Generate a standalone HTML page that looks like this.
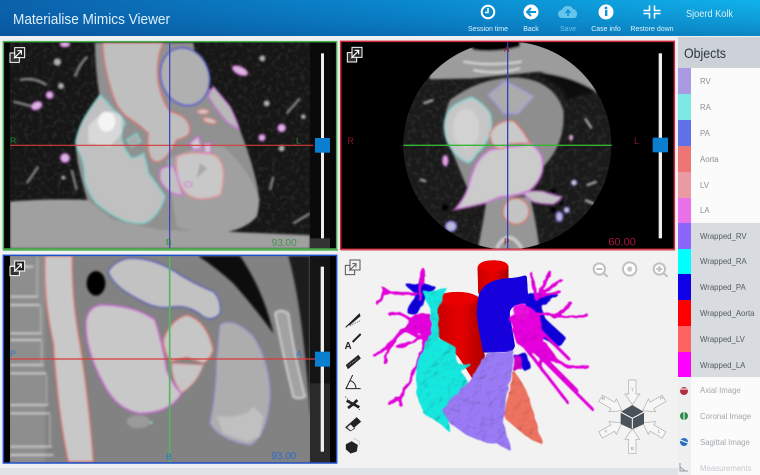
<!DOCTYPE html>
<html><head><meta charset="utf-8"><title>Materialise Mimics Viewer</title>
<style>
html,body{margin:0;padding:0;width:760px;height:475px;overflow:hidden;background:#eef0f2}
svg{display:block;font-family:"Liberation Sans",sans-serif}
</style></head><body>
<svg width="760" height="475" viewBox="0 0 760 475" xmlns="http://www.w3.org/2000/svg">
<defs>
<linearGradient id="hh" x1="0" x2="1" y1="0" y2="0"><stop offset="0" stop-color="#0b62ab"/><stop offset=".5" stop-color="#0a86cc"/><stop offset="1" stop-color="#10b2ea"/></linearGradient>
<linearGradient id="hv" x1="0" x2="0" y1="0" y2="1"><stop offset="0" stop-color="#0a5fa8" stop-opacity="0"/><stop offset="1" stop-color="#063f85" stop-opacity=".38"/></linearGradient>
<linearGradient id="redg" x1="0" x2="1" y1="0" y2="0"><stop offset="0" stop-color="#c80000"/><stop offset=".5" stop-color="#e60000"/><stop offset="1" stop-color="#a80000"/></linearGradient>
<filter id="b" x="-5%" y="-5%" width="110%" height="110%"><feGaussianBlur stdDeviation="3.2"/></filter>
<filter id="goo" x="-5%" y="-5%" width="110%" height="110%"><feGaussianBlur stdDeviation="4"/><feColorMatrix values="1 0 0 0 0 0 1 0 0 0 0 0 1 0 0 0 0 0 9 -3.6"/></filter>
<filter id="org" x="-5%" y="-5%" width="110%" height="110%">
<feGaussianBlur in="SourceGraphic" stdDeviation="3.5"/><feColorMatrix values="1 0 0 0 0 0 1 0 0 0 0 0 1 0 0 0 0 0 9 -3.6" result="g"/>
<feTurbulence type="fractalNoise" baseFrequency=".03" numOctaves="2" seed="4" result="t1"/><feDisplacementMap in="g" in2="t1" scale="16" result="s"/>
<feTurbulence type="fractalNoise" baseFrequency=".035" numOctaves="3" seed="11"/><feDiffuseLighting surfaceScale="5" diffuseConstant="1.22" lighting-color="#fff" result="l"><feDistantLight azimuth="230" elevation="58"/></feDiffuseLighting>
<feComposite in="l" in2="s" operator="arithmetic" k1="1.05"/><feGaussianBlur stdDeviation="1.6"/>
</filter>
<filter id="noise" x="0" y="0" width="100%" height="100%"><feTurbulence type="fractalNoise" baseFrequency=".07" numOctaves="3" seed="9"/><feColorMatrix values="0 0 0 0 1 0 0 0 0 1 0 0 0 0 1 1.6 0 0 0 -.72"/></filter>
<clipPath id="c1"><rect x="30" y="128" width="900" height="618"/></clipPath>
<clipPath id="c2"><circle cx="502" cy="436" r="312"/></clipPath>
<clipPath id="c2b"><rect x="5" y="127" width="995" height="619"/></clipPath>
<clipPath id="c3"><rect x="30" y="18" width="900" height="620"/></clipPath>
<g id="exp" fill="none" stroke="#fff" stroke-width="3"><rect x="14" y="0" width="30" height="30" fill="#222"/><path d="M0,16h14v14h14v14H0z" fill="#333"/><path d="M12,32L34,10M22,9h12v12" stroke-width="3.5"/></g>
<path id="ar" d="M-11,-110H11V-68H22L0,-36L-22,-68H-11Z" fill="#f6f6f6" stroke="#adadad" stroke-width="2"/>
</defs>

<rect width="760" height="475" fill="#eef0f2"/>

<!-- header -->
<rect width="760" height="36" fill="url(#hh)"/>
<rect width="760" height="36" fill="url(#hv)"/>
<text x="13" y="24" font-size="14.5" fill="#dff0fa" textLength="157" lengthAdjust="spacingAndGlyphs">Materialise  Mimics Viewer</text>
<g fill="#fff">
<circle cx="488" cy="12" r="6.3" fill="none" stroke="#fff" stroke-width="2"/><path d="M488,8v4.5h-3" fill="none" stroke="#fff" stroke-width="1.5"/>
<circle cx="531" cy="12" r="7.5"/><path d="M536,12h-8M531,8l-4,4 4,4" fill="none" stroke="#0c93d8" stroke-width="2"/>
<path d="M562,18a4,4 0 0 1 0-8a6,6 0 0 1 11-1a5,5 0 0 1 2,9z" fill="#66c3ea"/><path d="M568,16v-5M565.5,13l2.5-3 2.5,3" fill="none" stroke="#0c93d8" stroke-width="1.5"/>
<circle cx="606" cy="12" r="7.5"/><rect x="605" y="10" width="2.4" height="6" fill="#0c93d8"/><circle cx="606" cy="8" r="1.4" fill="#0c93d8"/>
<path d="M643.5,10.5h6v-5M660.5,10.5h-6v-5M643.5,13.5h6v5M660.5,13.5h-6v5" fill="none" stroke="#fff" stroke-width="1.6"/>
</g>
<g font-size="7" fill="#dcf1fb" text-anchor="middle">
<text x="488" y="31">Session time</text><text x="531" y="31">Back</text><text x="568" y="31" fill="#6cc5ea">Save</text><text x="606" y="31">Case info</text><text x="652" y="31">Restore down</text>
</g>
<text x="686" y="17" font-size="10" fill="#dcf1fb" textLength="47" lengthAdjust="spacingAndGlyphs">Sjoerd Kolk</text>

<!-- panel 1 -->
<g transform="scale(.33333)">
<rect x="10" y="125" width="1000" height="622" fill="#060606"/>
<g clip-path="url(#c1)">
<rect x="30" y="128" width="900" height="618" fill="#161616"/>
<rect x="30" y="128" width="900" height="618" filter="url(#noise)" opacity=".12"/>
<g filter="url(#b)">
<path d="M60,240Q100,230 140,255M40,305L100,320M225,230Q240,190 262,170M860,340L900,295M810,570L820,530M880,670L930,640M80,550L115,500M215,510L230,570" stroke="#8a8a8a" stroke-width="7" fill="none"/>
<g fill="#b0b0b0"><circle cx="172" cy="186" r="11"/><circle cx="183" cy="258" r="9"/><circle cx="787" cy="175" r="9"/><circle cx="800" cy="310" r="9"/><circle cx="910" cy="350" r="7"/><circle cx="845" cy="445" r="9"/><circle cx="190" cy="533" r="6"/></g>
<g fill="#d9b7df" stroke="#d070d8" stroke-width="4"><ellipse cx="720" cy="212" rx="24" ry="11" transform="rotate(25 720 212)"/><circle cx="149" cy="285" r="10"/><ellipse cx="110" cy="317" rx="16" ry="11" transform="rotate(-25 110 317)"/><circle cx="845" cy="384" r="11"/><circle cx="786" cy="413" r="9"/><circle cx="195" cy="474" r="13"/><ellipse cx="195" cy="133" rx="14" ry="7"/></g>
<path d="M285,128H580Q590,200 625,260Q680,330 720,390Q770,520 778,600Q775,635 770,650Q740,685 680,695L930,705V746H30V605Q150,595 262,600Q225,480 228,420Q250,340 298,285Q285,200 285,128Z" fill="#909090"/>
<path d="M30,605Q150,595 262,600L340,660L480,690L680,695L930,710V746H30Z" fill="#a0a0a0"/>
<path d="M500,480Q600,430 670,440Q750,510 778,600Q775,635 770,650Q730,690 680,695Q590,700 530,680Z" fill="#a0a0a0"/>
<path d="M308,128Q310,200 340,290Q355,330 380,350Q420,375 445,400Q440,440 450,470Q460,488 475,485Q500,480 530,420Q550,415 565,405Q575,385 565,370Q555,345 510,335Q485,300 475,250Q465,180 490,128Z" fill="#bfbfbf" stroke="#dd6a62" stroke-width="4"/>
<ellipse cx="555" cy="230" rx="72" ry="88" transform="rotate(-18 555 230)" fill="#b0b0b0" stroke="#4b55c8" stroke-width="5"/>
<path d="M625,290Q632,270 640,260Q670,295 690,320Q710,360 718,388Q695,378 680,365Q650,330 625,290Z" fill="#b8b8b8" stroke="#c868d8" stroke-width="4"/>
<ellipse cx="609" cy="335" rx="17" ry="7" fill="#ccc" stroke="#e08078" stroke-width="4"/><ellipse cx="629" cy="362" rx="20" ry="7" transform="rotate(15 629 362)" fill="#ccc" stroke="#e08078" stroke-width="4"/>
<path d="M300,285Q325,310 340,330Q365,345 375,370Q360,395 365,420Q375,455 395,475Q420,470 430,460Q440,490 445,520Q475,560 495,590Q485,620 470,640Q450,665 430,670Q395,670 370,660Q325,640 290,610Q265,580 255,540Q255,490 240,460Q225,440 228,420Q240,370 265,335Z" fill="#c0c0c0" stroke="#72d4d0" stroke-width="4"/>
<path d="M265,380Q320,310 365,350L365,400L330,440L265,430Z" fill="#d8d8d8"/><ellipse cx="320" cy="365" rx="26" ry="30" fill="#f4f4f4"/>
<path d="M380,420L410,400L422,425L395,440Z" fill="#aaa" stroke="#72d4d0" stroke-width="4"/>
<path d="M530,470Q565,455 600,460Q640,460 650,470Q670,490 670,520Q670,560 660,585Q620,600 590,595Q565,590 550,570Q530,540 530,510Z" fill="#c8c8c8" stroke="#e89098" stroke-width="4"/>
<path d="M600,490L622,505L590,535Z" fill="#a8a8a8"/>
<path d="M480,510Q500,495 520,500Q530,520 535,540Q540,565 550,585Q525,585 510,575Q490,560 480,540Z" fill="#c2c2c2" stroke="#d060d8" stroke-width="4"/>
<path d="M570,430L595,408L605,445L580,450Z" fill="#ccc" stroke="#d060d8" stroke-width="4"/><path d="M612,432L632,430L632,458L615,458Z" fill="#ccc" stroke="#d060d8" stroke-width="3"/>
<ellipse cx="565" cy="553" rx="12" ry="7" fill="#ccc" stroke="#d060d8" stroke-width="3"/>
</g>
</g>
<rect x="930" y="128" width="60" height="618" fill="#0a0a0a"/>
<rect x="930" y="715" width="60" height="30" fill="#333"/>
<path d="M30,436H940" stroke="#d83a3a" stroke-width="3.5"/>
<path d="M509,128V746" stroke="#4048c0" stroke-width="4"/>
<rect x="10" y="125" width="1000" height="622" fill="none" stroke="#48b04e" stroke-width="4.5"/>
<text x="30" y="430" font-size="26" fill="#2e8c3a">R</text><text x="888" y="430" font-size="26" fill="#2e8c3a">L</text>
<text x="498" y="735" font-size="26" fill="#2e8c3a">B</text><text x="815" y="738" font-size="30" fill="#2e8c3a" opacity=".8">93.00</text>
<rect x="963" y="160" width="9" height="555" fill="#eee"/><rect x="945" y="414" width="45" height="44" fill="#0a7fd0"/>
<use href="#exp" x="30" y="143"/>
</g>

<!-- panel 2 -->
<g transform="translate(340,0) scale(.33333)">
<rect x="2" y="124" width="1001" height="624" fill="#000"/>
<g clip-path="url(#c2b)">
<g clip-path="url(#c2)">
<rect x="180" y="120" width="650" height="640" fill="#1a1a1a"/>
<rect x="180" y="120" width="650" height="640" filter="url(#noise)" opacity=".12"/>
<g filter="url(#b)">
<path d="M240,125H770V280Q700,240 600,215Q500,225 400,235L270,238Z" fill="#9c9c9c"/>
<path d="M380,125H540V140Q470,160 400,150Z" fill="#050505"/>
<path d="M370,185Q450,200 545,185M400,210Q470,225 540,205" stroke="#d8d8d8" stroke-width="6" fill="none"/>
<path d="M595,218Q690,225 770,275Q720,285 680,300Q670,260 640,250Z" fill="#111"/>
<path d="M330,300Q420,232 530,232Q640,240 670,330Q678,430 610,500L560,585L460,600L380,560L330,440Q300,360 330,300Z" fill="#8e8e8e"/>
<path d="M440,595L570,590Q590,670 600,760H410Q430,670 440,595Z" fill="#969696"/>
<path d="M445,285Q470,265 495,245Q540,265 580,290Q555,315 535,340H490Q470,310 445,285Z" fill="#ababab" stroke="#a898e0" stroke-width="4"/>
<path d="M395,292Q430,310 450,340Q458,370 450,400Q435,440 410,460Q400,480 385,488Q340,470 320,420Q298,350 345,315Q370,300 395,292Z" fill="#c6c6c6" stroke="#74d8d4" stroke-width="4"/>
<ellipse cx="378" cy="385" rx="40" ry="60" fill="#d2d2d2"/>
<path d="M410,490Q425,465 450,450Q480,445 505,440Q540,440 570,430Q595,445 605,470Q612,500 605,520Q595,550 570,570Q525,590 480,590Q450,605 430,610Q390,620 345,628Q375,595 385,560Q395,520 410,490Z" fill="#cbcbcb" stroke="#cc70d8" stroke-width="5"/>
<path d="M548,580Q580,570 610,575Q640,588 665,590Q655,605 640,612Q605,612 580,605Z" fill="#c2c2c2" stroke="#cc70d8" stroke-width="4"/>
<path d="M450,400Q470,360 520,362Q550,390 570,430Q535,430 510,432Q495,445 480,447Q450,440 450,400Z" fill="#c9c9c9" stroke="#dc6a62" stroke-width="4"/>
<circle cx="528" cy="634" r="39" fill="#c4c4c4" stroke="#dc6a62" stroke-width="4"/>
<path d="M470,745Q505,680 545,745" fill="none" stroke="#d0d0d0" stroke-width="10"/>
<ellipse cx="333" cy="679" rx="16" ry="15" fill="#b8b8d8" stroke="#7a70e0" stroke-width="4"/>
<ellipse cx="658" cy="650" rx="10" ry="14" fill="#b8b8d8" stroke="#7a70e0" stroke-width="4"/>
<circle cx="680" cy="630" r="8" fill="#ccc" stroke="#7a70e0" stroke-width="4"/><circle cx="702" cy="548" r="8" fill="#ccc" stroke="#7a70e0" stroke-width="3"/>
<ellipse cx="316" cy="482" rx="8" ry="16" fill="#e0a8e0" stroke="#cc70d8" stroke-width="3"/><ellipse cx="693" cy="413" rx="6" ry="9" fill="#e0a8e0"/>
<g fill="#000"><circle cx="640" cy="575" r="9"/><circle cx="640" cy="630" r="9"/><circle cx="663" cy="610" r="7"/><circle cx="315" cy="622" r="10"/></g>
<path d="M250,310L280,300M735,355L755,385M735,600L770,615M770,545L740,556M240,538L258,544" stroke="#aaa" stroke-width="7"/>
</g>
</g>
<path d="M190,436H815" stroke="#35b535" stroke-width="4"/>
<path d="M503,127V746" stroke="#3840b8" stroke-width="4"/>
</g>
<rect x="2" y="124" width="1001" height="624" fill="none" stroke="#d4283e" stroke-width="4.5"/>
<text x="22" y="432" font-size="27" fill="#8e1628">R</text><text x="882" y="432" font-size="27" fill="#8e1628">L</text>
<text x="492" y="156" font-size="24" fill="#8e1628">A</text><text x="492" y="733" font-size="24" fill="#8e1628">P</text>
<text x="805" y="737" font-size="33" fill="#a8183a">60.00</text>
<rect x="956" y="160" width="10" height="555" fill="#eee"/><rect x="938" y="413" width="46" height="44" fill="#0a7fd0"/>
<use href="#exp" x="22" y="142"/>
</g>

<!-- sidebar -->
<rect x="678" y="37" width="82" height="438" fill="#fbfbfc"/>
<rect x="678" y="37" width="82" height="31" fill="#ccd2d8"/>
<text x="684" y="58" font-size="14" fill="#2c3640" textLength="42" lengthAdjust="spacingAndGlyphs">Objects</text>
<rect x="691" y="223" width="69" height="154" fill="#d8dce0"/>
<rect x="678" y="377" width="13" height="98" fill="#eef0f2"/>
<rect x="678" y="68" width="13" height="26" fill="#a99ae2"/><rect x="678" y="94" width="13" height="26" fill="#7ce9e5"/>
<rect x="678" y="120" width="13" height="26" fill="#5f70e8"/><rect x="678" y="146" width="13" height="26" fill="#ee7672"/>
<rect x="678" y="172" width="13" height="26" fill="#e99aa2"/><rect x="678" y="198" width="13" height="25" fill="#ea70ea"/>
<rect x="678" y="223" width="13" height="26" fill="#8a66ff"/><rect x="678" y="249" width="13" height="25" fill="#00ffff"/>
<rect x="678" y="274" width="13" height="26" fill="#1000e8"/><rect x="678" y="300" width="13" height="26" fill="#ff0000"/>
<rect x="678" y="326" width="13" height="26" fill="#ff6262"/><rect x="678" y="352" width="13" height="25" fill="#ff00ff"/>
<g font-size="7.8" fill="#8b8f93">
<text x="700" y="84">RV</text><text x="700" y="110">RA</text><text x="700" y="136">PA</text><text x="700" y="162">Aorta</text><text x="700" y="188">LV</text><text x="700" y="213">LA</text>
</g>
<g font-size="7.8" fill="#555b60">
<text x="700" y="239">Wrapped_RV</text><text x="700" y="264">Wrapped_RA</text><text x="700" y="290">Wrapped_PA</text><text x="700" y="316">Wrapped_Aorta</text><text x="700" y="342">Wrapped_LV</text><text x="700" y="368">Wrapped_LA</text>
</g>
<g font-size="7.8" fill="#a4a8ac">
<text x="700" y="393">Axial Image</text><text x="700" y="419">Coronal Image</text><text x="700" y="445">Sagittal Image</text><text x="700" y="471" fill="#c4c8cc">Measurements</text>
</g>
<circle cx="684" cy="391" r="4" fill="#b03040"/><path d="M680,389h8" stroke="#fff"/>
<circle cx="684" cy="416" r="4" fill="#2f8a4a"/><path d="M684,412v8" stroke="#fff"/>
<circle cx="684" cy="442" r="4" fill="#2a70c0"/><path d="M680,440l8,3" stroke="#fff"/>
<path d="M680,463v8h8M680,467l5,4" stroke="#999" fill="none"/>

<!-- panel 3 -->
<g transform="translate(0,250) scale(.33333)">
<rect x="10" y="16" width="1000" height="623" fill="#030303"/>
<g clip-path="url(#c3)">
<rect x="30" y="18" width="900" height="620" fill="#828282"/>
<g filter="url(#b)">
<rect x="30" y="18" width="105" height="620" fill="#8e8e8e"/>
<path d="M30,50H100M30,140H115M30,165H120M30,250H125M30,270H125M30,345H130M30,370H140M30,465H145M30,490H150M30,590H155M30,615H160" stroke="#cdcdcd" stroke-width="5" fill="none"/>
<path d="M112,20V140M122,170V250M125,275V345M140,375V465M150,495V590" stroke="#b0b0b0" stroke-width="4" fill="none"/>
<path d="M595,18H720Q790,120 820,250Q770,180 700,100Q650,55 595,18Z" fill="#0c0c0c"/>
<path d="M865,18H930V500Q910,180 865,18Z" fill="#1a1a1a"/>
<path d="M825,190Q840,175 865,190Q880,300 915,440Q895,450 880,440Q850,320 825,190Z" fill="#a2a2a2" stroke="#cecece" stroke-width="6"/>
<path d="M135,18H217Q215,150 240,280Q270,480 280,635H205Q175,500 160,280Q130,150 135,18Z" fill="#c8c8c8" stroke="#df6a5f" stroke-width="4"/>
<ellipse cx="288" cy="100" rx="28" ry="37" fill="#060606"/>
<path d="M325,65Q345,30 390,25Q470,25 540,75Q590,105 640,125Q665,150 660,190Q640,215 610,200Q570,165 520,170Q470,180 420,150Q340,110 325,65Z" fill="#c2c2c2" stroke="#4852c0" stroke-width="4"/>
<path d="M258,215Q265,160 320,165Q410,170 465,210Q490,290 500,360Q520,410 545,430Q510,490 420,490Q350,480 310,400Q255,300 258,215Z" fill="#c8c8c8" stroke="#c865d0" stroke-width="5"/>
<path d="M490,270Q510,210 560,195Q620,210 640,300Q630,330 610,340L560,322L510,335Q490,300 490,270Z" fill="#c6c6c6" stroke="#dd6a60" stroke-width="4"/>
<path d="M515,340L610,345Q590,400 545,428Q515,390 515,340Z" fill="#c6c6c6" stroke="#e88c90" stroke-width="3"/>
<path d="M660,225Q700,200 760,260Q810,340 810,440Q800,560 750,585Q660,570 630,520Q650,420 650,340Z" fill="#adadad" stroke="#9a90e0" stroke-width="3"/>
<path d="M650,500L700,500L740,490L760,470L790,500L780,560L740,575L670,550Z" fill="#c0c0c0"/>
<ellipse cx="415" cy="515" rx="35" ry="20" fill="#9a9a9a"/><circle cx="454" cy="518" r="4" fill="#7fdcd8"/>
</g>
</g>
<rect x="930" y="18" width="60" height="620" fill="#141414"/>
<rect x="930" y="400" width="60" height="238" fill="#2a2a2a"/>
<path d="M30,327H945" stroke="#d83a3a" stroke-width="3.5"/>
<path d="M509,18V638" stroke="#55b560" stroke-width="5"/>
<rect x="10" y="16" width="1000" height="623" fill="none" stroke="#1f50c8" stroke-width="4.5"/>
<text x="30" y="320" font-size="26" fill="#2874c8">P</text><text x="888" y="320" font-size="26" fill="#2874c8">A</text><text x="498" y="628" font-size="26" fill="#2874c8">B</text>
<text x="814" y="627" font-size="30" fill="#2a6cd0">93.00</text>
<rect x="962" y="50" width="10" height="555" fill="#eee"/><rect x="945" y="305" width="45" height="45" fill="#0a7fd0"/>
<use href="#exp" x="30" y="33"/>
</g>

<!-- panel 4 -->
<rect x="341" y="251" width="337" height="217" fill="#f2f2f2"/>
<rect x="0" y="468" width="678" height="7" fill="#dfe3e6"/>
<rect x="3" y="249.5" width="335" height="1.2" fill="#48b04e"/>
<rect x="341" y="249.5" width="334" height="1.2" fill="#e06a78"/>
<g transform="translate(340,250) scale(.33333)">
<g fill="none" stroke="#555" stroke-width="3"><rect x="30" y="30" width="30" height="30"/><path d="M16,46h14v14h14v14H16zM28,62L48,42M37,41h11v11"/></g>
<!-- vessels -->
<g filter="url(#org)">
<path d="M190,100L285,105L260,150L225,190L200,190L225,130Z" fill="#0a00d8"/>
<path d="M560,130L660,130L600,170L620,210L680,265L650,290L600,260L555,240Z" fill="#1000d8"/>
<path d="M520,320L560,310L570,350L555,365L535,340Z" fill="#1000d8"/>
</g>
<g filter="url(#goo)"><path d="M413,48Q460,25 505,48V110L415,135Z" fill="url(#redg)"/>
<path d="M290,165Q350,115 415,140V230L435,320L400,390L355,320L295,260Z" fill="url(#redg)"/>
<ellipse cx="460" cy="48" rx="45" ry="17" fill="#ea0000"/><ellipse cx="352" cy="146" rx="62" ry="20" fill="#ea0000"/></g>
<g filter="url(#goo)"><path d="M415,140Q430,90 500,85Q530,85 560,75L565,160Q535,160 520,170Q505,180 510,200L525,290L515,305L430,308L415,230L410,190Z" fill="#1200dc"/></g>
<g filter="url(#org)">
<g stroke="#e000d8" fill="none" stroke-linecap="round">
<path d="M260,270L190,240Q150,270 135,340M195,245L105,320M255,275L210,400L175,440L145,460M175,440L185,470M215,210L180,190L150,195M230,130L130,130L110,160M130,115L150,130M240,150L250,60M170,290L240,265" stroke-width="8"/>
<path d="M575,70L590,150M630,65L600,120M665,90L600,130M660,125L590,140M695,160L650,195L580,190M745,198L640,200M520,240L680,350L745,350M530,260L685,460M560,280L760,480M600,300L605,360M600,240L690,330M530,240L710,420" stroke-width="8"/>
</g>
<path d="M220,190L270,190L280,280L240,250L190,240Z" fill="#e000d8"/>
<path d="M245,60L258,58L255,110L235,100Z" fill="#e000d8"/>
<path d="M505,200L570,170L600,200L610,280L590,310L530,260Z" fill="#e000d8"/>
<circle cx="543" cy="185" r="24" fill="#e810dc"/>
<path d="M520,240L620,280L660,340L600,320L530,280Z" fill="#e000d8"/>
<path d="M525,320L545,320L545,358L515,360Z" fill="#d000c8"/>
</g>
<g filter="url(#org)">
<path d="M250,125L325,115L295,170L295,265L345,290L355,345L405,340L360,360L385,400L340,470L325,515L330,548L300,520L250,490L230,430L230,340L260,275L275,250L270,175Z" fill="#14e2da"/>
</g>
<g filter="url(#org)">
<path d="M515,355L555,410L610,585L560,560L500,510L490,490L505,440Z" fill="#e8705f"/>
</g>
<g filter="url(#org)">
<path d="M440,310L525,305L510,370L495,460L490,520L515,605L470,580L440,580L380,555L330,520L305,480L390,395L415,350Z" fill="#9678f0"/>
</g>
<!-- zoom icons -->
<g fill="#fff" stroke="#c0c0c0" stroke-width="6">
<circle cx="778" cy="57" r="17"/><path d="M769,57h18M791,70l12,10" fill="none"/>
<circle cx="869" cy="57" r="20"/><circle cx="869" cy="57" r="8" fill="#c8c8c8" stroke="none"/>
<circle cx="958" cy="57" r="17"/><path d="M949,57h18M958,48v18M971,70l12,10" fill="none"/>
</g>
<!-- tools -->
<g fill="#222" stroke="#222">
<path d="M17,232L58,192L60,198L28,225" stroke-width="3"/><path d="M30,228L60,212" stroke-width="2" stroke-dasharray="3 3"/>
<text x="14" y="297" font-size="29" font-weight="bold" stroke="none">A</text><path d="M38,276L62,252" stroke-width="6"/>
<path d="M18,345L55,315L62,325L24,357Z"/><path d="M26,346L52,326" stroke="#ddd" stroke-width="2" stroke-dasharray="3 3"/>
<path d="M38,375L18,416H62M30,392Q46,396 48,414" fill="none" stroke-width="3"/>
<path d="M20,452L58,472M24,474L40,462L52,450" stroke-width="8" fill="none"/><path d="M15,440L60,480" stroke-width="2" stroke-dasharray="4 4" fill="none"/>
<path d="M16,532L50,502L63,515L30,543Z"/><path d="M20,532L32,522L44,535L32,543Z" fill="#eee" stroke-width="2"/>
<path d="M35,574L53,585L50,604L32,610L18,598V583Z"/>
<path d="M40,565L60,575L58,585" fill="none" stroke="#bbb" stroke-width="2"/>
</g>
<!-- nav cube -->
<use href="#ar" transform="translate(877,500)"/>
<use href="#ar" transform="translate(877,500) rotate(60)"/>
<use href="#ar" transform="translate(877,500) rotate(120)"/>
<use href="#ar" transform="translate(877,500) rotate(180)"/>
<use href="#ar" transform="translate(877,500) rotate(240)"/>
<use href="#ar" transform="translate(877,500) rotate(300)"/>
<path d="M877,465L912,486V522L877,538L842,522V486Z" fill="#4a525a"/>
<path d="M842,486L877,505L912,486M877,505V536" stroke="#fff" stroke-width="3" fill="none"/>
<g font-size="13" fill="#888" text-anchor="middle"><text x="877" y="425">T</text><text x="965" y="450">P</text><text x="790" y="450">R</text><text x="797" y="548">A</text><text x="957" y="548">L</text><text x="877" y="600">B</text></g>
</g>
</svg>
</body></html>
